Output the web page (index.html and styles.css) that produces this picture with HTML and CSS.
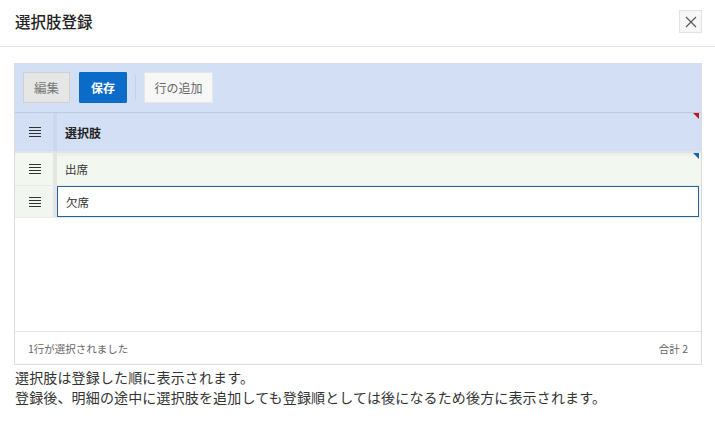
FILE: index.html
```html
<!DOCTYPE html>
<html lang="ja">
<head>
<meta charset="utf-8">
<title>選択肢登録</title>
<link rel="stylesheet" href="styles.css">
</head>
<body>
<div class="dialog">
  <header class="dlg-header">
    <h1 class="dlg-title">選択肢登録</h1>
    <button class="close-btn" aria-label="閉じる">
      <svg width="12" height="12" viewBox="0 0 12 12"><path d="M1 1 L11 11 M11 1 L1 11" stroke="#555" stroke-width="1.1" fill="none"/></svg>
    </button>
  </header>
  <main class="dlg-main">
    <div class="grid">
      <div class="toolbar">
        <button class="btn btn-edit">編集</button>
        <button class="btn btn-save">保存</button>
        <span class="tb-sep"></span>
        <button class="btn btn-add">行の追加</button>
      </div>
      <div class="grid-body">
        <div class="row row-head">
          <div class="handle"><svg class="hicon" width="12" height="10" viewBox="0 0 12 10"><path d="M0 0.5H12M0 3.5H12M0 6.5H12M0 9.5H12" stroke="#333" stroke-width="1"/></svg></div>
          <div class="sep"></div>
          <div class="cell head-cell">選択肢<span class="tri tri-red"></span></div>
        </div>
        <div class="row row-data row-changed">
          <div class="handle"><svg class="hicon" width="12" height="10" viewBox="0 0 12 10"><path d="M0 0.5H12M0 3.5H12M0 6.5H12M0 9.5H12" stroke="#333" stroke-width="1"/></svg></div>
          <div class="sep"></div>
          <div class="cell">出席<span class="tri tri-blue"></span></div>
        </div>
        <div class="row row-data row-active">
          <div class="handle"><svg class="hicon" width="12" height="10" viewBox="0 0 12 10"><path d="M0 0.5H12M0 3.5H12M0 6.5H12M0 9.5H12" stroke="#333" stroke-width="1"/></svg></div>
          <div class="sep"></div>
          <div class="cell cell-edit">欠席</div>
        </div>
      </div>
      <div class="grid-footer">
        <span>1行が選択されました</span>
        <span>合計 2</span>
      </div>
    </div>
    <p class="note">選択肢は登録した順に表示されます。<br>登録後、明細の途中に選択肢を追加しても登録順としては後になるため後方に表示されます。</p>
  </main>
</div>
</body>
</html>
```

FILE: styles.css
```css
* { box-sizing: border-box; }
html, body { margin: 0; padding: 0; background: #fff; }
body {
  font-family: "Noto Sans CJK JP", "Noto Sans", sans-serif;
  color: #333;
  width: 715px;
  height: 437px;
  overflow: hidden;
}
.dlg-header {
  height: 47px;
  border-bottom: 1px solid #e3e3e3;
  display: flex;
  align-items: flex-start;
  justify-content: space-between;
  padding: 0 13px 0 15px;
}
.dlg-title {
  margin: 0;
  font-size: 15.5px;
  font-weight: 500;
  line-height: 20px;
  padding-top: 11px;
  color: #222;
}
.close-btn {
  margin-top: 10px;
  width: 23px;
  height: 23px;
  padding: 0;
  border: 1px solid #e2e2e2;
  background: #f6f6f6;
  display: flex;
  align-items: center;
  justify-content: center;
}
.dlg-main { padding: 16px 13px 0 14px; }
.grid {
  border: 1px solid #dcdcdc;
  border-top-color: #d3dff4;
}
.toolbar {
  height: 49px;
  background: #d3dff4;
  border-bottom: 1px solid #bccbe3;
  display: flex;
  align-items: flex-start;
  padding: 8px 8px 0;
  gap: 8px;
}
.btn {
  height: 31px;
  font-family: inherit;
  font-size: 12.5px;
  padding: 0;
  border: 1px solid transparent;
  cursor: pointer;
}
.btn-edit {
  width: 47px;
  background: #e6e6e6;
  border-color: #d0d0d0;
  color: #777;
}
.btn-save {
  width: 48px;
  margin-left: 1px;
  background: #0b6bc8;
  border-color: #0b6bc8;
  color: #fff;
  font-weight: 700;
  font-size: 12px;
  border-radius: 1px;
}
.tb-sep {
  width: 1px;
  height: 25px;
  margin-top: 3px;
  background: #c4d0e5;
}
.btn-add {
  width: 69px;
  background: #f7f7f7;
  border-color: #e6e6e6;
  color: #666;
  font-size: 12px;
}
.grid-body {
  height: 218px;
  background: #fff;
}
.row {
  display: flex;
  position: relative;
}
.handle {
  width: 38px;
  display: flex;
  align-items: center;
  justify-content: center;
}
.hicon { display: block; margin-left: 1px; }
.sep { width: 4px; }
.cell {
  flex: 1;
  display: flex;
  align-items: center;
  padding-left: 8px;
  font-size: 11.5px;
  color: #333;
  position: relative;
  margin-right: 2px;
}
.row-head {
  height: 40px;
  background: #d3dff4;
  border-bottom: 2px solid #e1e3e6;
}
.row-head .sep { background: #cdd8ec; }
.head-cell { font-weight: 700; font-size: 12px; color: #222; }
.row-data { height: 33px; border-bottom: 1px solid #e8ebe6; }
.row-data .sep { background: #e4e4e4; }
.row-changed { background: #f2f7ef; }
.row-changed .cell {
  background: linear-gradient(#e9eee6, #f2f7ef 5px);
}
.row-active { height: 32px; background: #f2f6f0; }
.cell-edit {
  background: #fff;
  border: 1px solid #255fa5;
  padding-left: 8px;
}
.tri {
  position: absolute;
  top: 0;
  right: 0;
  width: 0;
  height: 0;
  border-style: solid;
  border-width: 0 6px 6px 0;
}
.tri-red { border-color: transparent #c0161b transparent transparent; }
.tri-blue { border-color: transparent #1a63b0 transparent transparent; }
.grid-footer {
  height: 33px;
  border-top: 1px solid #e3e3e3;
  display: flex;
  align-items: center;
  justify-content: space-between;
  padding: 0 13px 0 13px;
  font-size: 10.5px;
  color: #666;
}
.note {
  margin: 2px 0 0 1px;
  font-size: 14px;
  line-height: 20px;
  color: #333;
  letter-spacing: 0.15px;
}
```
